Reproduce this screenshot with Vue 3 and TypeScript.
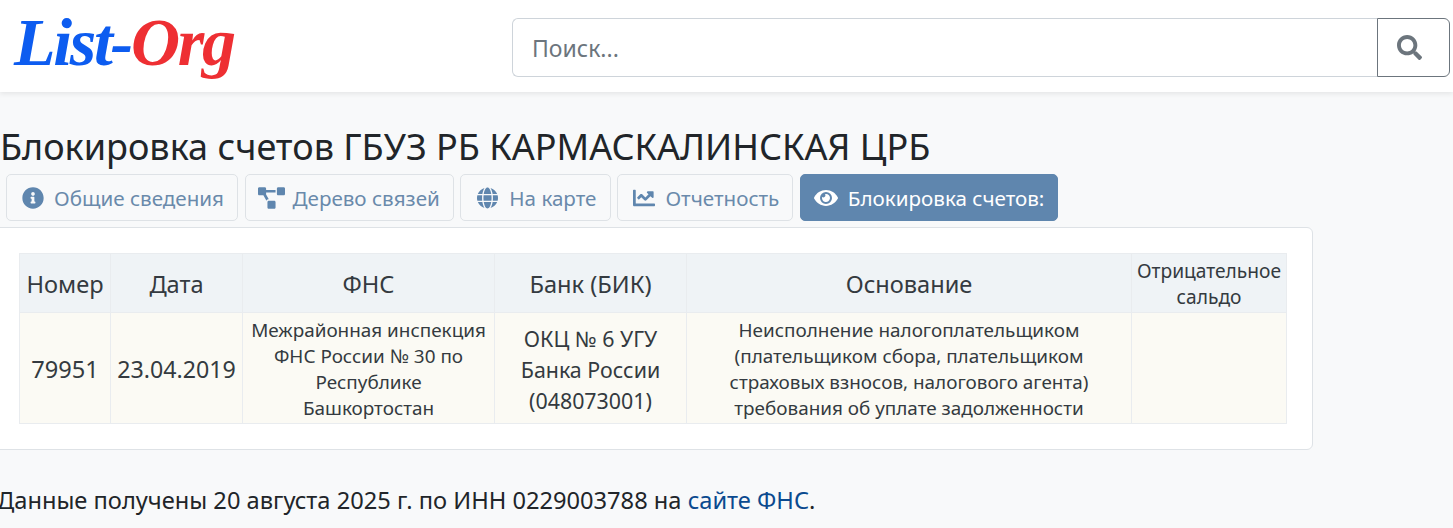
<template>
  <header class="topbar">
    <a class="logo" href="#"><span class="logo-blue">List-</span><span class="logo-red">Org</span></a>
    <form class="search" @submit.prevent>
      <input class="search-input" type="text" placeholder="Поиск..." />
      <button class="search-btn" type="submit" aria-label="Поиск">
        <svg viewBox="0 0 512 512" class="search-icon"><path :d="searchPath" /></svg>
      </button>
    </form>
  </header>

  <main class="page">
    <h1 class="title">Блокировка счетов ГБУЗ РБ КАРМАСКАЛИНСКАЯ ЦРБ</h1>
    <nav class="tabs">
      <a v-for="tab in tabs" :key="tab.label" href="#" class="tab" :class="[tab.kind, { active: tab.active }]">
        <svg :viewBox="tab.box" class="tab-icon" :style="{ width: tab.size + 'px' }"><path :d="tab.path" /></svg>
        <span>{{ tab.label }}</span>
      </a>
    </nav>

    <section class="card">
      <table class="blocks">
        <colgroup>
          <col v-for="w in colWidths" :key="w" :style="{ width: w + 'px' }" />
        </colgroup>
        <thead>
          <tr>
            <th>Номер</th>
            <th>Дата</th>
            <th>ФНС</th>
            <th>Банк (БИК)</th>
            <th>Основание</th>
            <th class="small-head">Отрицательное сальдо</th>
          </tr>
        </thead>
        <tbody>
          <tr>
            <td>79951</td>
            <td class="date">23.04.2019</td>
            <td class="small">Межрайонная инспекция<br />ФНС России № 30 по<br />Республике<br />Башкортостан</td>
            <td class="bank">ОКЦ № 6 УГУ<br />Банка России<br />(048073001)</td>
            <td class="small">Неисполнение налогоплательщиком<br />(плательщиком сбора, плательщиком<br />страховых взносов, налогового агента)<br />требования об уплате задолженности</td>
            <td></td>
          </tr>
        </tbody>
      </table>
    </section>

    <p class="source">Данные получены 20 августа 2025 г. по ИНН 0229003788 на <a href="#">сайте ФНС</a>.</p>
  </main>
</template>

<script setup lang="ts">
interface Tab {
  label: string;
  box: string;
  size: number;
  path: string;
  kind?: string;
  active?: boolean;
}

const searchPath =
  "M505 442.7L405.3 343c-4.5-4.5-10.6-7-17-7H372c27.6-35.3 44-79.7 44-128C416 93.1 322.9 0 208 0S0 93.1 0 208s93.1 208 208 208c48.3 0 92.7-16.4 128-44v16.3c0 6.4 2.5 12.5 7 17l99.7 99.7c9.4 9.4 24.6 9.4 33.9 0l28.3-28.3c9.4-9.4 9.4-24.6.1-34zM208 336c-70.7 0-128-57.2-128-128 0-70.7 57.2-128 128-128 70.7 0 128 57.2 128 128 0 70.7-57.2 128-128 128z";

const colWidths = [91, 132, 252, 192, 445, 155];

const tabs: Tab[] = [
  {
    label: "Общие сведения",
    box: "0 0 512 512",
    size: 22,
    path: "M256 8C119.043 8 8 119.083 8 256c0 136.997 111.043 248 248 248s248-111.003 248-248C504 119.083 392.957 8 256 8zm0 110c23.196 0 42 18.804 42 42s-18.804 42-42 42-42-18.804-42-42 18.804-42 42-42zm56 254c0 6.627-5.373 12-12 12h-88c-6.627 0-12-5.373-12-12v-24c0-6.627 5.373-12 12-12h12v-64h-12c-6.627 0-12-5.373-12-12v-24c0-6.627 5.373-12 12-12h64c6.627 0 12 5.373 12 12v100h12c6.627 0 12 5.373 12 12v24z",
  },
  {
    label: "Дерево связей",
    box: "0 0 640 512",
    size: 27,
    kind: "tree",
    path: "M384 320H256c-17.67 0-32 14.33-32 32v128c0 17.67 14.33 32 32 32h128c17.67 0 32-14.33 32-32V352c0-17.67-14.33-32-32-32zM192 32c0-17.67-14.33-32-32-32H32C14.33 0 0 14.33 0 32v128c0 17.67 14.33 32 32 32h95.72l73.16 128.04C211.98 300.98 232.4 288 256 288h.28L192 175.51V128h224V64H192V32zM608 0H480c-17.67 0-32 14.33-32 32v128c0 17.67 14.33 32 32 32h128c17.67 0 32-14.33 32-32V32c0-17.67-14.33-32-32-32z",
  },
  {
    label: "На карте",
    box: "0 0 496 512",
    size: 21,
    kind: "map",
    path: "M336.5 160C322 70.7 287.8 8 248 8s-74 62.7-88.5 152h177zM152 256c0 22.2 1.2 43.5 3.3 64h185.3c2.1-20.5 3.3-41.8 3.3-64s-1.2-43.5-3.3-64H155.3c-2.1 20.5-3.3 41.8-3.3 64zm324.7-96c-28.6-67.9-86.5-120.4-158-141.6 24.4 33.8 41.2 84.7 50 141.6h108zM177.2 18.4C105.8 39.6 47.8 92.1 19.3 160h108c8.7-56.9 25.5-107.8 49.9-141.6zM487.4 192H372.7c2.1 21 3.3 42.5 3.3 64s-1.2 43-3.3 64h114.6c5.5-20.5 8.6-41.8 8.6-64s-3.1-43.5-8.5-64zM120 256c0-21.5 1.2-43 3.3-64H8.6C3.2 212.5 0 233.8 0 256s3.2 43.5 8.6 64h114.6c-2-21-3.2-42.5-3.2-64zm39.5 96c14.5 89.3 48.7 152 88.5 152s74-62.7 88.5-152h-177zm159.3 141.6c71.4-21.2 129.4-73.7 158-141.6h-108c-8.8 56.9-25.6 107.8-50 141.6zM19.3 352c28.6 67.9 86.5 120.4 158 141.6-24.4-33.8-41.2-84.7-50-141.6h-108z",
  },
  {
    label: "Отчетность",
    box: "0 0 512 512",
    size: 22,
    path: "M496 384H64V80c0-8.84-7.16-16-16-16H16C7.16 64 0 71.16 0 80v336c0 17.67 14.33 32 32 32h464c8.84 0 16-7.16 16-16v-32c0-8.84-7.16-16-16-16zM464 96H345.94c-21.38 0-32.09 25.85-16.97 40.97l32.4 32.4L288 242.75l-73.37-73.37c-12.5-12.5-32.76-12.5-45.25 0l-68.69 68.69c-6.25 6.25-6.25 16.38 0 22.63l22.62 22.62c6.25 6.25 16.38 6.25 22.63 0L192 237.25l73.37 73.37c12.5 12.5 32.76 12.5 45.25 0l96-96 32.4 32.4c15.12 15.12 40.97 4.41 40.97-16.97V112c.01-8.84-7.15-16-15.99-16z",
  },
  {
    label: "Блокировка счетов:",
    box: "0 0 576 512",
    size: 24,
    active: true,
    path: "M572.52 241.4C518.29 135.59 410.93 64 288 64S57.68 135.64 3.48 241.41a32.35 32.35 0 0 0 0 29.19C57.71 376.41 165.07 448 288 448s230.32-71.64 284.52-177.41a32.35 32.35 0 0 0 0-29.19zM288 400a144 144 0 1 1 144-144 143.93 143.93 0 0 1-144 144zm0-240a95.31 95.31 0 0 0-25.31 3.79 47.85 47.85 0 0 1-66.9 66.9A95.78 95.78 0 1 0 288 160z",
  },
];
</script>

<style>
html,
body {
  margin: 0;
  background: #f8f9fa;
  overflow: hidden;
}
</style>

<style scoped>
.topbar {
  height: 92px;
  box-sizing: border-box;
  display: flex;
  align-items: flex-start;
  justify-content: space-between;
  padding: 18px 3px 0 14px;
  background: #fff;
  box-shadow: 0 2px 5px rgba(0, 0, 0, 0.08);
  font-family: "Noto Sans", sans-serif;
}

.logo {
  font-family: "Liberation Serif", serif;
  font-style: italic;
  font-weight: 700;
  font-size: 68px;
  line-height: 48px;
  text-decoration: none;
  letter-spacing: -2.3px;
}

.logo-blue {
  color: #0d5cf0;
}

.logo-red {
  color: #ee2f33;
}

.search {
  display: flex;
  width: 938px;
  height: 59px;
}

.search-input {
  flex: 1;
  min-width: 0;
  box-sizing: border-box;
  padding: 0 19px;
  border: 1px solid #ced4da;
  border-right: none;
  border-radius: 6px 0 0 6px;
  font: 23px "Noto Sans", sans-serif;
  color: #495057;
  outline: none;
}

.search-input::placeholder {
  color: #6c757d;
  opacity: 1;
}

.search-btn {
  width: 73px;
  padding: 0 8px 0 0;
  border: 1px solid #6c757d;
  border-radius: 0 6px 6px 0;
  background: #fff;
  display: flex;
  align-items: center;
  justify-content: center;
}

.search-icon {
  width: 25px;
  height: 25px;
  fill: #6c757d;
}

.page {
  font-family: "Noto Sans", sans-serif;
  color: #212529;
}

.title {
  margin: 35px 0 0;
  font-size: 36px;
  line-height: 40px;
  font-weight: 400;
}

.tabs {
  display: flex;
  gap: 6.5px;
  margin: 7px 0 0 6px;
}

.tab {
  display: flex;
  align-items: center;
  gap: 10px;
  height: 47px;
  box-sizing: border-box;
  padding: 0 13px 0 15px;
  border: 1px solid #dee2e6;
  border-radius: 5px;
  color: #6a8aab;
  font-size: 20.6px;
  text-decoration: none;
  white-space: nowrap;
}

.tab-icon {
  height: 22px;
  color: #5f86ae;
  fill: currentColor;
  flex: none;
}

.tab.tree {
  gap: 8px;
  padding-left: 12px;
}

.tab.map {
  gap: 11px;
  padding: 0 13.5px 0 16px;
}

.tab.active {
  padding: 0 12.5px 0 13px;
  background: #5f86ae;
  border-color: #5f86ae;
  color: #fff;
}

.tab.active .tab-icon {
  color: #fff;
}

.card {
  width: 1333px;
  margin: 6px 0 0 -20px;
  box-sizing: border-box;
  padding: 25px 25px 25px 38px;
  background: #fff;
  border: 1px solid #dee2e6;
  border-radius: 6px;
}

.blocks {
  width: 1267px;
  table-layout: fixed;
  border-collapse: collapse;
  text-align: center;
  font-size: 23.6px;
  line-height: 33px;
}

.blocks th,
.blocks td {
  padding: 0 3px;
  border: 1px solid #e9ecef;
  font-weight: 400;
  vertical-align: middle;
}

.blocks th {
  height: 56px;
  padding-top: 2px;
  background: #eff3f6;
  color: #343a40;
}

.blocks td {
  height: 108px;
  padding-top: 2px;
  background: #fbfaf4;
  color: #343a40;
}

.blocks .date {
  font-size: 23.2px;
}

.blocks .bank {
  font-size: 21.4px;
  line-height: 31px;
}

.blocks .small {
  font-size: 18.9px;
  line-height: 26px;
}

.blocks .small-head {
  font-size: 19.2px;
  line-height: 26px;
}

.source {
  margin: 35px 0 0 -3px;
  font-size: 23.65px;
  line-height: 30px;
}

.source a {
  color: #0b4a8f;
  text-decoration: none;
}
</style>
